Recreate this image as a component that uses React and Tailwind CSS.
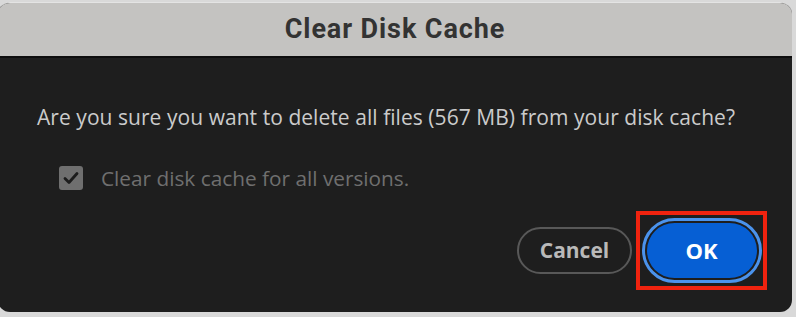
import React from "react";

export default function App() {
  return (
    <div className="w-[796px] h-[317px] bg-[#d9d9d9] overflow-hidden">
      <div className="ml-[-2px] mt-[2px] w-[794px] h-[310px] rounded-[12px] overflow-hidden flex flex-col bg-[#1e1e1e] border-t border-[#e4e4e4]">
        <div className="h-[55px] shrink-0 bg-[#c4c3c1] border-b-2 border-[#0e0e0e] flex items-center justify-center">
          <span className="text-[27px] leading-none font-bold text-[#333333] tracking-[0.9px]" style={{ fontFamily: "Roboto, 'Liberation Sans', sans-serif" }}>
            Clear Disk Cache
          </span>
        </div>
        <div className="flex-1 flex flex-col pl-[39px] pr-[25px]" style={{ fontFamily: "'Open Sans', Lato, sans-serif" }}>
          <p className="mt-[46px] text-[21px] leading-[26px] text-[#cbcbcb] whitespace-nowrap tracking-[0.05px]">
            Are you sure you want to delete all files (567 MB) from your disk cache?
          </p>
          <div className="mt-[36px] ml-[22px] flex items-center gap-[18px]">
            <div className="w-[24px] h-[24px] rounded-[3px] bg-[#6f6f6f] flex items-center justify-center">
              <svg width="16" height="14" viewBox="0 0 16 14" fill="none">
                <path d="M2 7.5 L6 11.5 L14 2.5" stroke="#1c1c1c" strokeWidth="2.8" strokeLinecap="round" strokeLinejoin="round" />
              </svg>
            </div>
            <span className="text-[20.8px] leading-[24px] text-[#6f6f6f] whitespace-nowrap">Clear disk cache for all versions.</span>
          </div>
          <div className="mt-[21px] flex items-center justify-end gap-[4px]">
            <button className="w-[115px] h-[47px] rounded-full border-2 border-[#585858] text-[#b9b9b9] text-[21px] font-bold">
              Cancel
            </button>
            <div className="w-[131px] h-[79px] border-4 border-[#f0230f] flex items-center justify-center">
              <div className="w-[120px] h-[65px] rounded-full border-[3px] border-[#4b93ec] p-[2px] flex">
                <button className="flex-1 rounded-full bg-[#065fd4] text-white text-[22px] font-bold">OK</button>
              </div>
            </div>
          </div>
        </div>
      </div>
    </div>
  );
}
